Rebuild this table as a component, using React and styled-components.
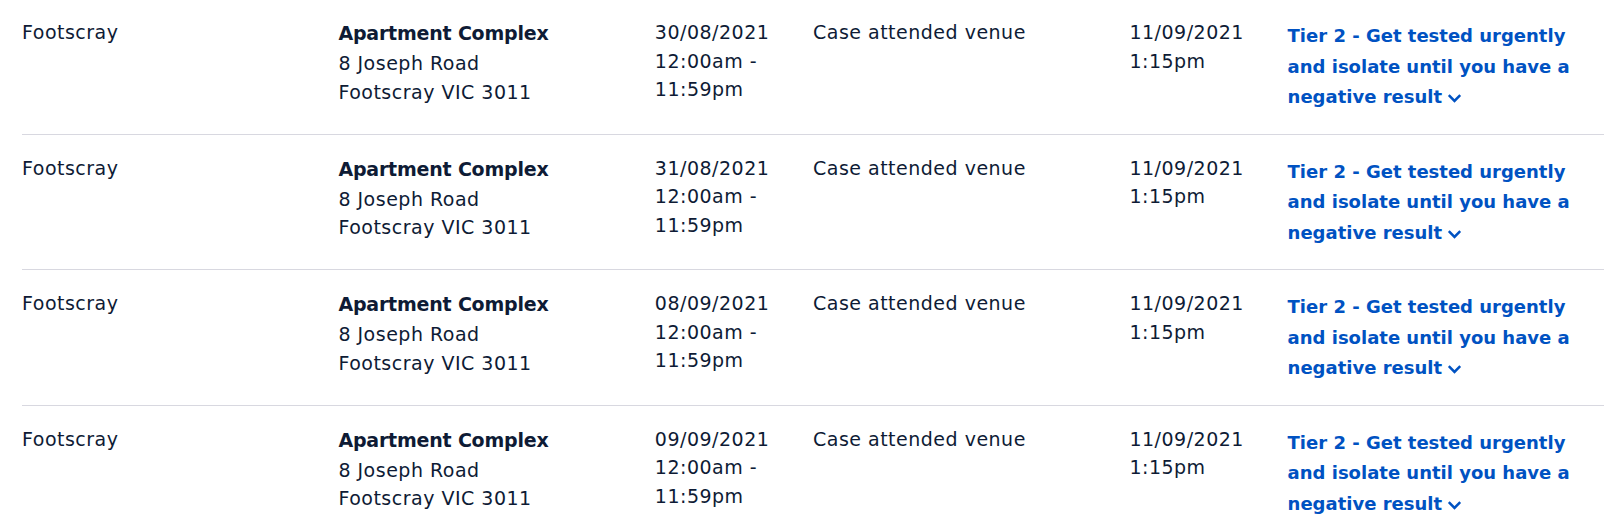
import React from 'react';
import styled, { createGlobalStyle } from 'styled-components';

const GlobalStyle = createGlobalStyle`
  body {
    margin: 0;
    background: #ffffff;
    font-family: "DejaVu Sans", "Noto Sans", sans-serif;
    color: #0e1b35;
  }
`;

const Table = styled.div`
  margin: -1px 0 0 22px;
`;

const Row = styled.div`
  display: grid;
  grid-template-columns: 2fr 2fr 1fr 2fr 1fr 2fr;
  border-bottom: 1px solid #d8d8e0;
  padding: 19px 0 21px;
`;

const Cell = styled.div`
  padding-right: 24px;
  font-size: 19px;
  line-height: 28.5px;
  letter-spacing: 0.5px;
`;

const VenueName = styled.div`
  font-weight: 700;
  line-height: 31px;
  letter-spacing: -0.2px;
`;

const TierLink = styled.a`
  display: block;
  margin-top: 3px;
  padding-right: 8px;
  color: #0052c2;
  font-weight: 700;
  font-size: 18px;
  line-height: 30.5px;
  letter-spacing: 0;
  text-decoration: none;
  cursor: pointer;
`;

const Chevron = () => (
  <svg
    width="15"
    height="10"
    viewBox="0 0 15 10"
    style={{ marginLeft: 5, verticalAlign: 'middle' }}
  >
    <path d="M1.8 2.2l5.7 5.7 5.7-5.7" fill="none" stroke="#0052c2" strokeWidth="2.5" />
  </svg>
);

const rows = ['30/08/2021', '31/08/2021', '08/09/2021', '09/09/2021'];

const App = () => (
  <>
    <GlobalStyle />
    <Table>
      {rows.map(date => (
        <Row key={date}>
          <Cell>Footscray</Cell>
          <Cell>
            <VenueName>Apartment Complex</VenueName>
            <div>8 Joseph Road</div>
            <div>Footscray VIC 3011</div>
          </Cell>
          <Cell>
            {date} 12:00am - 11:59pm
          </Cell>
          <Cell>Case attended venue</Cell>
          <Cell>11/09/2021 1:15pm</Cell>
          <Cell>
            <TierLink>
              Tier 2 - Get tested urgently and isolate until you have a
              negative result
              <Chevron />
            </TierLink>
          </Cell>
        </Row>
      ))}
    </Table>
  </>
);

export default App;
